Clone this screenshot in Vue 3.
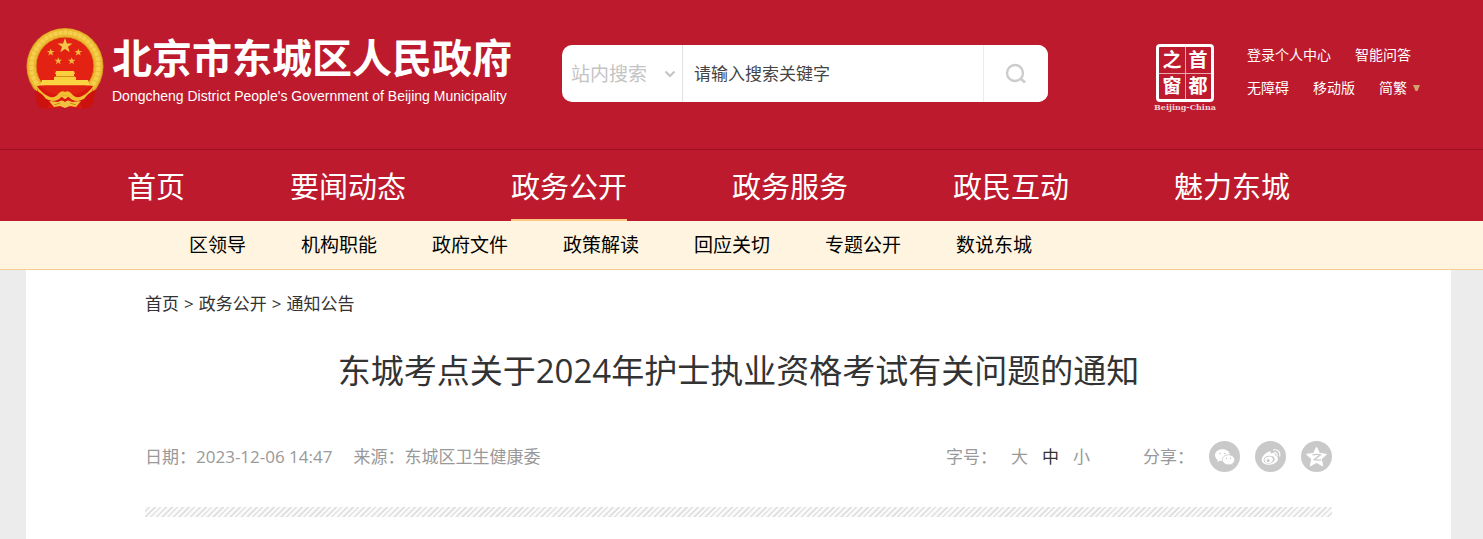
<script setup>
import { ref } from 'vue'

const mainNav = ['首页', '要闻动态', '政务公开', '政务服务', '政民互动', '魅力东城']
const activeNav = '政务公开'
const subNav = ['区领导', '机构职能', '政府文件', '政策解读', '回应关切', '专题公开', '数说东城']
const sizes = ['大', '中', '小']
const size = ref('中')
const keyword = ref('')
</script>

<template>
  <div class="page">
    <header class="header">
      <div class="top">
        <a class="brand" href="#">
          <svg class="emblem" viewBox="0 0 78 82" aria-hidden="true">
            <circle cx="39" cy="38.500" r="38.500" fill="#d79a1d" />
            <circle cx="39" cy="38.200" r="37.500" fill="#eebb33" />
            <circle cx="39" cy="38" r="33.500" fill="none" stroke="#f6cf4d" stroke-width="4" />
            <circle cx="39" cy="38" r="33.500" fill="none" stroke="#e2a92c" stroke-width="5" stroke-dasharray="1 4" opacity=".5" />
            <circle cx="39" cy="38" r="29" fill="#e42214" stroke="#d99a1c" stroke-width="1" />
            <path d="M39 10l1.900 5.400h5.600l-4.500 3.400 1.700 5.500-4.700-3.300-4.700 3.300 1.700-5.500-4.500-3.400h5.600z" fill="#f3c548" />
            <g fill="#f1b83c">
              <path d="M24.700 20.500l1 2.600h2.800l-2.300 1.700.9 2.700-2.400-1.600-2.400 1.600.9-2.700-2.300-1.700h2.800z" />
              <path d="M52.300 20.500l1 2.600h2.800l-2.300 1.700.9 2.700-2.400-1.600-2.400 1.600.9-2.700-2.300-1.700h2.800z" />
              <path d="M32.300 29.200l1 2.600h2.800l-2.300 1.700.9 2.700-2.400-1.600-2.400 1.600.9-2.700-2.300-1.700h2.800z" />
              <path d="M45.700 29.200l1 2.600h2.800l-2.300 1.700.9 2.700-2.400-1.600-2.400 1.600.9-2.700-2.300-1.700h2.800z" />
            </g>
            <path d="M30 43h18l1 3H29z M30 46h18v2.500H30z M28 49h22v3H28z" fill="#f9cf3e" />
            <path d="M29 48h20v.8H29z" fill="#d98e1c" />
            <path d="M16 52h46l2 5.500H14z" fill="#f9d341" />
            <path d="M13 57.500h52l-8 9H21z" fill="#e02213" />
            <path d="M11 58q3-1 6 2 6 6 14 6l8 5 8-5q8 0 14-6 3-3 6-2l-1 9-10 13q-8 1-17-2-9 3-17 2L12 67z" fill="#d9180f" />
            <path d="M10 57q6 9 14 12 6 1 9-4 3-3 6-1 3-2 6 1 3 5 9 4 8-3 14-12l-3 9q-6 6-13 7-7 0-10-5-3-2-3 0-1-2-3 0-3 5-10 5-7-1-13-7z" fill="#f1bd31" />
            <path d="M9 62q7 3 11 9l5 2-4 8q-5 0-9-3-3-8-3-16zM69 62q-7 3-11 9l-5 2 4 8q5 0 9-3 3-8 3-16z" fill="#cb120e" />
            <path d="M23 73l9 1q4-3 7 0 3-3 7 0l9-1-5 6-6-1-5 2-5-2-6 1z" fill="#f2c141" />
            <path d="M28 77l6-2M50 77l-6-2" stroke="#c98a18" />
          </svg>
          <span class="brand-text">
            <strong>北京市东城区人民政府</strong>
            <small>Dongcheng District People's Government of Beijing Municipality</small>
          </span>
        </a>

        <form class="search" role="search" @submit.prevent>
          <div class="scope">
            <select aria-label="搜索范围">
              <option>站内搜索</option>
            </select>
            <svg class="chevron" viewBox="0 0 12 8" aria-hidden="true">
              <path d="M1.500 1.500L6 6l4.500-4.500" fill="none" stroke="#c4c4c4" stroke-width="2" />
            </svg>
          </div>
          <input v-model="keyword" type="text" aria-label="搜索关键字" placeholder="请输入搜索关键字" />
          <button type="submit" aria-label="搜索">
            <svg viewBox="0 0 22 22" aria-hidden="true">
              <circle cx="10" cy="10" r="8" fill="none" stroke="#ccc" stroke-width="2.400" />
              <path d="M15.500 15.500L20 19.500" stroke="#ccc" stroke-width="2.600" />
            </svg>
          </button>
        </form>

        <a class="seal" href="#">
          <span class="seal-grid"><i>之</i><i>首</i><i>窗</i><i>都</i></span>
          <span class="seal-caption">Beijing-China</span>
        </a>

        <div class="quick">
          <div class="quick-row">
            <a href="#">登录个人中心</a>
            <a href="#">智能问答</a>
          </div>
          <div class="quick-row">
            <a href="#">无障碍</a>
            <a href="#">移动版</a>
            <a class="lang" href="#">简繁<svg viewBox="0 0 8 8" aria-hidden="true"><path d="M0 0h7L4.500 6h-2z" fill="#d0a168" /></svg></a>
          </div>
        </div>
      </div>

      <nav class="main-nav">
        <a v-for="item in mainNav" :key="item" href="#" :class="{ active: item === activeNav }">{{ item }}</a>
      </nav>
    </header>

    <nav class="sub-nav">
      <a v-for="item in subNav" :key="item" href="#">{{ item }}</a>
    </nav>

    <main class="article">
      <div class="crumbs">
        <a href="#">首页</a><span>&gt;</span><a href="#">政务公开</a><span>&gt;</span><a href="#">通知公告</a>
      </div>
      <h1>东城考点关于2024年护士执业资格考试有关问题的通知</h1>
      <div class="meta">
        <span class="date">日期：2023-12-06 14:47</span>
        <span>来源：东城区卫生健康委</span>
        <div class="font-size">
          <span>字号：</span>
          <button v-for="s in sizes" :key="s" type="button" :class="{ on: s === size }" @click="size = s">{{ s }}</button>
        </div>
        <div class="share">
          <span>分享：</span>
          <a href="#" aria-label="微信">
            <svg viewBox="0 0 31 31">
              <circle cx="15.500" cy="15.500" r="15.500" fill="#c9c9c9" />
              <path d="M13.500 8.300c-4.300 0-7.500 2.600-7.500 6 0 1.900 1 3.500 2.700 4.600l-.7 2.200 2.700-1.300c1 .3 1.900.4 2.900.4 4.200 0 7.400-2.600 7.400-5.900 0-3.400-3.300-6-7.500-6z" fill="#fff" />
              <path d="M19.500 13.800c-3.500 0-6.200 2.200-6.200 5s2.700 5 6.200 5c.8 0 1.600-.1 2.300-.4l2.200 1.200-.6-1.900c1.500-.9 2.300-2.300 2.300-3.900 0-2.800-2.700-5-6.200-5z" fill="#fff" stroke="#c9c9c9" stroke-width=".8" />
              <g fill="#c9c9c9"><circle cx="11" cy="12.500" r=".8" /><circle cx="15.800" cy="12.500" r=".8" /><circle cx="17.500" cy="17.300" r=".7" /><circle cx="21.500" cy="17.300" r=".7" /></g>
            </svg>
          </a>
          <a href="#" aria-label="微博">
            <svg viewBox="0 0 31 31">
              <circle cx="15.500" cy="15.500" r="15.500" fill="#c9c9c9" />
              <path d="M13.600 10.800c1.600-.6 2.800.1 2.400 1.900 2.600-1 4.900-.5 4.200 1.900 1.900.6 3 1.900 2.600 3.900-.6 3.100-4.600 5.300-8.700 5.300-4.200 0-7.400-2-7.400-4.900 0-3.200 3.800-7.100 6.900-8.100z" fill="#fff" />
              <ellipse cx="14.200" cy="18.600" rx="5.600" ry="3.900" fill="#c9c9c9" transform="rotate(-8 14.200 18.600)" />
              <ellipse cx="13.800" cy="18.900" rx="4.200" ry="3.200" fill="#fff" transform="rotate(-15 13.800 18.900)" />
              <circle cx="13.100" cy="19.400" r="1.500" fill="#c9c9c9" />
              <path d="M19 11.800c2-.4 3.500 1 3 3M18.700 8.900c4-.8 7.100 2.200 6.100 6.300" fill="none" stroke="#fff" stroke-width="1.200" stroke-linecap="round" />
            </svg>
          </a>
          <a href="#" aria-label="QQ空间">
            <svg viewBox="0 0 31 31">
              <circle cx="15.500" cy="15.500" r="15.500" fill="#c9c9c9" />
              <path d="M15.500 6.200l3 6.200 7 .9-5.200 4.700 1.400 6.900-6.200-3.400-6.200 3.400 1.400-6.900-5.200-4.700 7-.9z" fill="#fff" stroke="#fff" stroke-linejoin="round" />
              <path d="M11.500 13.800c3-.6 5.500-.5 8 0l-6.300 4.900c2.500.5 4.500.5 7 .1" fill="none" stroke="#c9c9c9" stroke-width="1.300" />
            </svg>
          </a>
        </div>
      </div>
      <div class="stripe"></div>
    </main>
  </div>
</template>

<style>
body {
  margin: 0;
  background: #ececec;
}
</style>

<style scoped>
.page {
  font-family: "Open Sans", "Noto Sans CJK SC", sans-serif;
  font-size: 17px;
  color: #333;
}
a {
  color: inherit;
  text-decoration: none;
}
.header {
  background: #bd1a2d;
  color: #fff;
}
.top {
  display: flex;
  height: 149px;
  padding: 0 62px 0 26px;
  border-bottom: 1px solid #9c1022;
}
.brand {
  display: flex;
  flex: 0 0 491px;
  gap: 8px;
  min-width: 0;
  padding-top: 28px;
}
.emblem {
  flex: none;
  width: 78px;
  height: 82px;
}
.brand-text {
  display: flex;
  flex-direction: column;
  padding-top: 5px;
  white-space: nowrap;
}
.brand-text strong {
  font-size: 40px;
  line-height: 50px;
}
.brand-text small {
  font-family: "Liberation Sans", sans-serif;
  font-size: 14px;
  line-height: 26px;
}
.search {
  display: flex;
  flex: 0 1 486px;
  height: 57px;
  margin: 45px 0 0 45px;
  overflow: hidden;
  border-radius: 10px;
  background: #fff;
}
.scope {
  position: relative;
  flex: 0 0 120px;
  border-right: 1px solid #e2e2e2;
}
.scope select {
  width: 100%;
  height: 100%;
  padding: 0 0 0 9px;
  border: 0;
  appearance: none;
  background: transparent;
  color: #c4c4c4;
  font: inherit;
  font-size: 19px;
}
.chevron {
  position: absolute;
  top: 25px;
  right: 6px;
  width: 12px;
  height: 8px;
  pointer-events: none;
}
.search input {
  flex: 1;
  min-width: 0;
  padding: 0 11px;
  border: 0;
  outline: 0;
  color: #444;
  font: inherit;
}
.search input::placeholder {
  color: #444;
}
.search button {
  display: flex;
  flex: 0 0 65px;
  align-items: center;
  justify-content: center;
  padding: 0;
  border: 0;
  border-left: 1px solid #ececec;
  background: #fff;
}
.search button svg {
  width: 22px;
  height: 22px;
}
.seal {
  display: flex;
  flex-direction: column;
  align-items: center;
  width: 64px;
  margin-left: auto;
  padding-top: 44px;
}
.seal-grid {
  display: grid;
  grid-template-columns: 1fr 1fr;
  width: 52px;
  height: 52px;
  border: 3px solid #fff;
  border-radius: 4px;
  background:
    linear-gradient(#e9a9b1, #e9a9b1) center / 1px 100% no-repeat,
    linear-gradient(#e9a9b1, #e9a9b1) center / 100% 1px no-repeat;
}
.seal-grid i {
  font-size: 19px;
  font-style: normal;
  font-weight: 700;
  line-height: 26px;
  text-align: center;
}
.seal-caption {
  font-family: "DejaVu Serif", serif;
  font-size: 8px;
  font-weight: 700;
  line-height: 10px;
  white-space: nowrap;
  color: #f3d3d7;
}
.quick {
  margin-left: 30px;
  padding-top: 38px;
  font-size: 14px;
  line-height: 33px;
  white-space: nowrap;
}
.quick-row {
  display: flex;
  gap: 24px;
}
.lang svg {
  width: 8px;
  height: 8px;
  margin-left: 6px;
}
.main-nav {
  display: flex;
  gap: 105px;
  padding-left: 127px;
  font-size: 29px;
  line-height: 73px;
}
.main-nav a {
  height: 69px;
  border-bottom: 2px solid transparent;
  white-space: nowrap;
}
.main-nav .active {
  border-color: #fbc981;
}
.sub-nav {
  display: flex;
  gap: 55px;
  padding-left: 189px;
  border-bottom: 1px solid #f6cd91;
  background: #fef4df;
  color: #000;
  font-size: 19px;
  line-height: 48px;
}
.article {
  margin: 0 32px 0 26px;
  padding: 20px 119px 22px;
  background: #fff;
}
.crumbs {
  display: flex;
  gap: 5px;
  line-height: 28px;
}
h1 {
  margin: 29px 0 0;
  font-size: 33px;
  font-weight: 400;
  line-height: 48px;
  text-align: center;
}
.meta {
  display: flex;
  align-items: center;
  height: 31px;
  margin-top: 46px;
  color: #999;
  line-height: 24px;
  white-space: nowrap;
}
.date {
  margin-right: 21px;
}
.font-size {
  display: flex;
  gap: 14px;
  margin-left: auto;
}
.font-size button {
  padding: 0;
  border: 0;
  background: none;
  color: #999;
  font: inherit;
}
.font-size .on {
  color: #333;
}
.share {
  display: flex;
  align-items: center;
  gap: 15px;
  margin-left: 53px;
}
.share a {
  display: flex;
}
.share svg {
  width: 31px;
  height: 31px;
}
.stripe {
  height: 10px;
  margin-top: 35px;
  background: repeating-linear-gradient(135deg, #fafafa 0 2px, #dfdfdf 3px 4px);
}
</style>
